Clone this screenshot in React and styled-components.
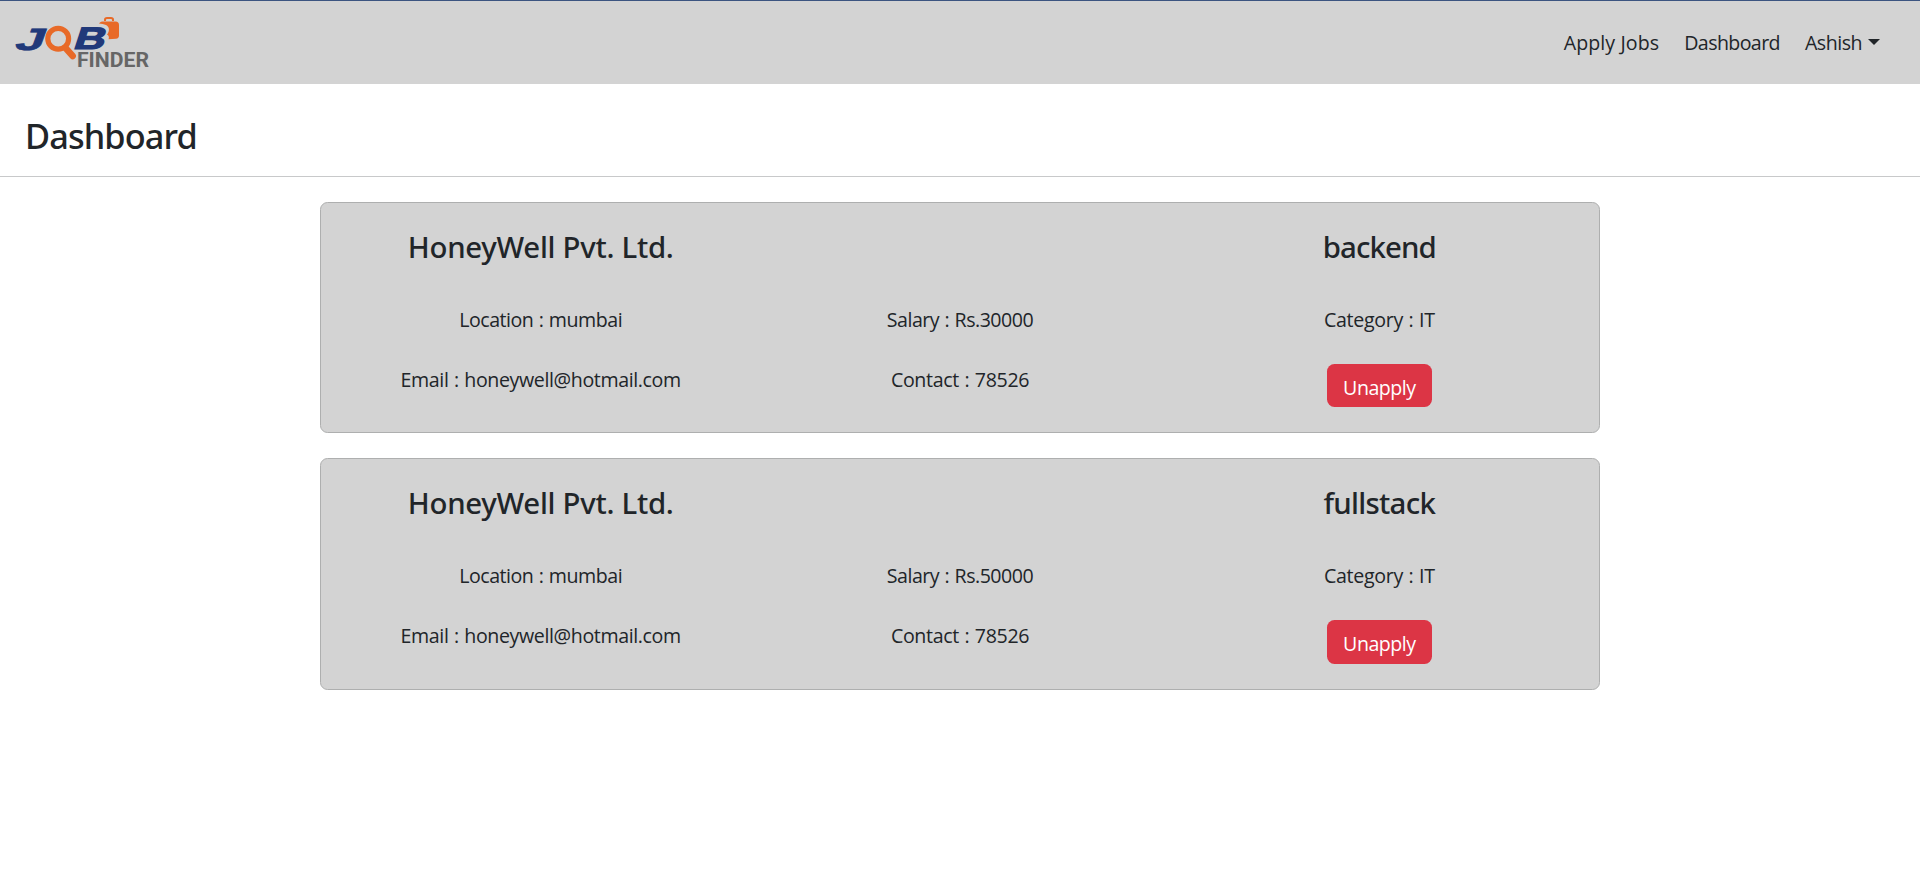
import React from "react";
import styled, { createGlobalStyle } from "styled-components";

const GlobalStyle = createGlobalStyle`
  * { box-sizing: border-box; }
  body {
    margin: 0;
    background: #fff;
    color: #212529;
    font: 400 19.6px/30px "Open Sans", "Noto Sans", sans-serif;
  }
`;

const Navbar = styled.header`
  display: flex;
  justify-content: space-between;
  align-items: flex-start;
  height: 84px;
  padding: 0 40px 0 10px;
  border-top: 1px solid #3b5480;
  background: #d3d3d3;
`;

const LogoSvg = styled.svg`
  display: block;
  margin-top: 4px;
`;

const NavLinks = styled.nav`
  display: flex;
  gap: 25px;
  padding-top: 27px;
`;

const NavLink = styled.a`
  display: flex;
  align-items: center;
  color: inherit;
  text-decoration: none;
  letter-spacing: ${(p) => p.$tracking || 0}px;
`;

const Caret = styled.span`
  margin: 0 0 3px 6px;
  border-top: 6px solid #212529;
  border-left: 6px solid transparent;
  border-right: 6px solid transparent;
`;

const TitleBar = styled.div`
  height: 93px;
  padding: 31px 25px 0;
  border-bottom: 1px solid #c8c9ca;
`;

const Title = styled.h2`
  margin: 0;
  font: 500 34.3px/42px "Noto Sans", sans-serif;
  letter-spacing: -0.88px;
`;

const JobList = styled.main`
  display: flex;
  flex-direction: column;
  gap: 25px;
  width: 1280px;
  margin: 25.2px auto 0;
`;

const JobCard = styled.article`
  display: grid;
  grid-template-columns: repeat(3, 1fr);
  padding: 25px 10px;
  border: 1px solid #aeafaf;
  border-radius: 7.5px;
  background: #d3d3d3;
  text-align: center;
`;

const Heading = styled.h3`
  margin: 0 0 38px;
  font: 500 29.4px/38px "Noto Sans", sans-serif;
  letter-spacing: ${(p) => p.$tracking || 0}px;
`;

const Detail = styled.p`
  margin: 0 0 ${(p) => (p.$last ? 0 : 28)}px;
  line-height: 32px;
  letter-spacing: ${(p) => p.$tracking || 0}px;
  word-spacing: 0.8px;
`;

const UnapplyButton = styled.button`
  justify-self: center;
  width: 105px;
  height: 43.2px;
  padding: 9px 0 4px;
  border: 0;
  border-radius: 7.5px;
  background: #dc3545;
  color: #fff;
  font: inherit;
  line-height: 30px;
  letter-spacing: -0.5px;
`;

const LogoText = styled.text`
  font-family: ${(p) => p.$family};
  font-weight: ${(p) => p.$weight || 700};
`;

const jobs = [
  { role: "backend", roleTracking: -0.9, salary: 30000 },
  { role: "fullstack", roleTracking: -0.7, salary: 50000 },
];

function Logo() {
  return (
    <LogoSvg width="150" height="75" viewBox="10 5 150 75">
      <LogoText $family={'"Liberation Sans", sans-serif'} fontSize="30" fill="#21397a" stroke="#21397a" strokeWidth="0.6"
        transform="translate(13.2 49.5) skewX(-20) scale(1.75 1.03)">J</LogoText>
      <path d="M99 23.5c1-1.7 3-2 5-2h11.500q3.500 0 3.500 3.500v10.500q0 3-3 3.200l-7.500.5c1-2 .2-3.700-1.500-4.700 3-3.500 2.500-8-1-9.500-2-.9-4.500-1.200-7-1.500z" fill="#e86a28" />
      <path d="M105 21v-1.200q0-1.800 2-1.800h4q2 0 2 1.800V21" fill="none" stroke="#e86a28" strokeWidth="2" />
      <circle cx="58.200" cy="38.700" r="10.400" fill="none" stroke="#e86a28" strokeWidth="5.200" />
      <path d="M66 48.500l6.700 7.500" fill="none" stroke="#e86a28" strokeWidth="6.500" strokeLinecap="round" />
      <LogoText $family={'"Liberation Sans", sans-serif'} fontSize="30" fill="#21397a" stroke="#21397a" strokeWidth="1.2"
        transform="translate(72.300 49) skewX(-18) scale(1.43 1.03)">B</LogoText>
      <LogoText $family={"Roboto, sans-serif"} x="77" y="66.700" fontSize="21" fill="#666"
        textLength="72" lengthAdjust="spacingAndGlyphs">FINDER</LogoText>
    </LogoSvg>
  );
}

function Job({ job }) {
  return (
    <JobCard>
      <Heading $tracking={-0.28}>HoneyWell Pvt. Ltd.</Heading>
      <span />
      <Heading $tracking={job.roleTracking}>{job.role}</Heading>
      <Detail $tracking={-0.48}>Location : mumbai</Detail>
      <Detail $tracking={-0.5}>Salary : Rs.{job.salary}</Detail>
      <Detail $tracking={-0.3}>Category : IT</Detail>
      <Detail $last $tracking={-0.38}>Email : honeywell@hotmail.com</Detail>
      <Detail $last $tracking={-0.34}>Contact : 78526</Detail>
      <UnapplyButton>Unapply</UnapplyButton>
    </JobCard>
  );
}

export default function App() {
  return (
    <>
      <GlobalStyle />
      <Navbar>
        <Logo />
        <NavLinks>
          <NavLink $tracking={0.1}>Apply Jobs</NavLink>
          <NavLink $tracking={-0.6}>Dashboard</NavLink>
          <NavLink $tracking={-0.5}>Ashish<Caret /></NavLink>
        </NavLinks>
      </Navbar>
      <TitleBar>
        <Title>Dashboard</Title>
      </TitleBar>
      <JobList>
        {jobs.map((job) => <Job key={job.role} job={job} />)}
      </JobList>
    </>
  );
}
